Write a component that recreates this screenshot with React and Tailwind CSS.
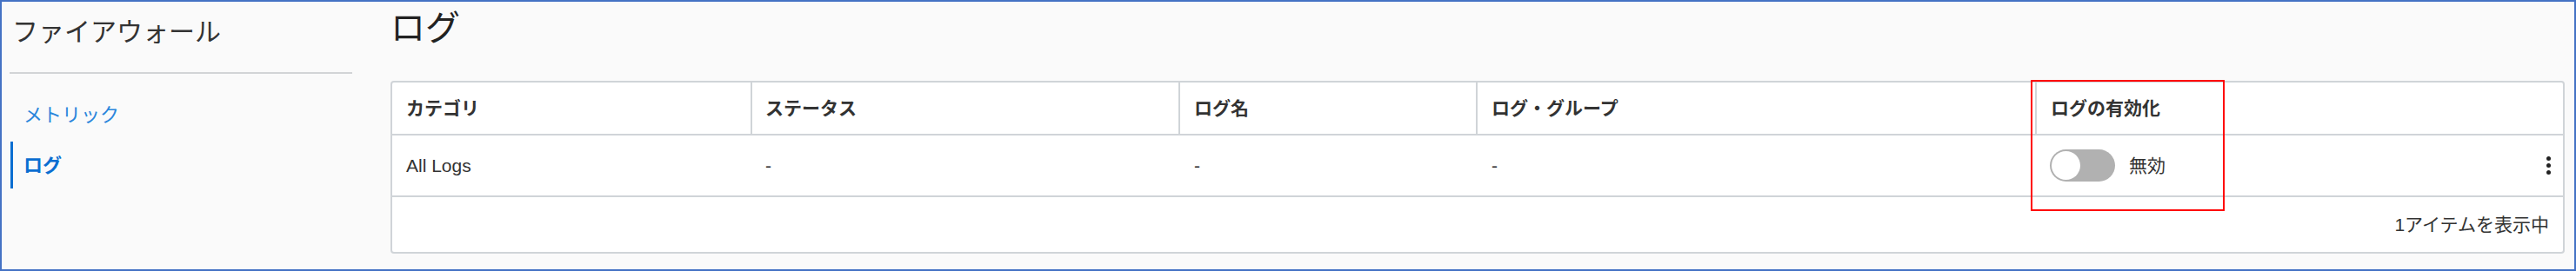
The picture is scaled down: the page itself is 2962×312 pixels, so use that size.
import React from "react";

const FONT = { fontFamily: '"Liberation Sans", "Noto Sans CJK JP", sans-serif' };

function Toggle() {
  return (
    <div className="w-[75px] h-[37px] rounded-full bg-[#b1b1b1] flex items-center px-[2px]">
      <div className="w-[33px] h-[33px] rounded-full bg-white" />
    </div>
  );
}

function Kebab() {
  return (
    <div className="flex flex-col items-center gap-[3px]">
      <span className="w-[5px] h-[5px] rounded-full bg-[#222]" />
      <span className="w-[5px] h-[5px] rounded-full bg-[#222]" />
      <span className="w-[5px] h-[5px] rounded-full bg-[#222]" />
    </div>
  );
}

export default function App() {
  const cols = "grid grid-cols-[412px_492px_342px_643px_1fr]";
  return (
    <div
      style={FONT}
      className="relative w-[2962px] h-[312px] border-2 border-[#4472c4] bg-[#fafafa] flex text-[#333] overflow-hidden"
    >
      {/* Sidebar */}
      <aside className="w-[428px] shrink-0 pl-[9px] pt-[17px]">
        <h2 className="pl-[3px] text-[30px] leading-[36px] font-normal text-[#333]">ファイアウォール</h2>
        <div className="mt-[28px] w-[394px] h-[2px] bg-[#d2d4d6]" />
        <nav className="mt-[20px] flex flex-col gap-[4px]">
          <div className="ml-[1px] h-[54px] flex items-center border-l-[3px] border-transparent pl-[12px] text-[22px] text-[#2a86dc]">
            メトリック
          </div>
          <div className="ml-[1px] h-[54px] flex items-center border-l-[3px] border-[#0a6ed1] pl-[12px] text-[22px] font-bold text-[#0a6ed1]">
            ログ
          </div>
        </nav>
      </aside>

      {/* Main */}
      <main className="flex-1 pl-[19px] pr-[11px] pt-[6px]">
        <h1 className="text-[40px] leading-[48px] font-normal text-[#222]">ログ</h1>
        <div className="mt-[37px] border-2 border-[#d0d4d8] rounded-[4px] bg-white">
          {/* Header */}
          <div className={`${cols} h-[61px] border-b-2 border-[#d0d4d8] text-[21px] font-semibold text-[#333]`}>
            <div className="flex items-center pl-[16px]">カテゴリ</div>
            <div className="flex items-center pl-[15px] border-l-2 border-[#d0d4d8]">ステータス</div>
            <div className="flex items-center pl-[16px] border-l-2 border-[#d0d4d8]">ログ名</div>
            <div className="flex items-center pl-[16px] border-l-2 border-[#d0d4d8]">ログ・グループ</div>
            <div className="flex items-center pl-[16px] border-l-2 border-[#d0d4d8]">ログの有効化</div>
          </div>
          {/* Body row */}
          <div className={`${cols} h-[71px] border-b-2 border-[#d0d4d8] text-[21px] text-[#333]`}>
            <div className="flex items-center pl-[16px]">All Logs</div>
            <div className="flex items-center pl-[17px]">-</div>
            <div className="flex items-center pl-[18px]">-</div>
            <div className="flex items-center pl-[18px]">-</div>
            <div className="flex items-center pl-[17px] pr-[14px]">
              <Toggle />
              <span className="ml-[16px]">無効</span>
              <div className="ml-auto">
                <Kebab />
              </div>
            </div>
          </div>
          {/* Footer */}
          <div className="h-[63px] flex items-center justify-end pr-[16px] text-[21px] text-[#333]">
            1アイテムを表示中
          </div>
        </div>
      </main>

      {/* Annotation box */}
      <div className="absolute left-[2333px] top-[90px] w-[223px] h-[151px] border-2 border-[#ff0000] pointer-events-none" />
    </div>
  );
}
